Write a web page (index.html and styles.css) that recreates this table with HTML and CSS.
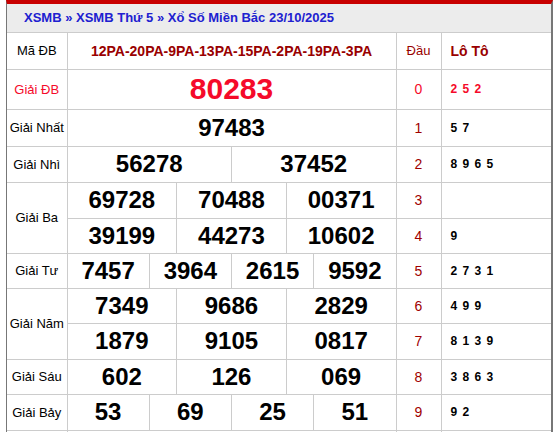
FILE: index.html
```html
<!DOCTYPE html>
<html lang="vi">
<head>
<meta charset="utf-8">
<title>XSMB 23/10/2025</title>
<link rel="stylesheet" href="styles.css">
</head>
<body>
<div class="wrap">
  <div class="crumb"><a href="#">XSMB</a> » <a href="#">XSMB Thứ 5</a> » <a href="#">Xổ Số Miền Bắc 23/10/2025</a></div>
  <table class="kq">
    <colgroup>
      <col class="c-label">
      <col class="c-m"><col class="c-m"><col class="c-m"><col class="c-m"><col class="c-m"><col class="c-m">
      <col class="c-m"><col class="c-m"><col class="c-m"><col class="c-m"><col class="c-m"><col class="c-m">
      <col class="c-dau">
      <col class="c-loto">
    </colgroup>
    <tr class="r-head">
      <td class="lbl">Mã ĐB</td>
      <td colspan="12" class="madb">12PA-20PA-9PA-13PA-15PA-2PA-19PA-3PA</td>
      <td class="dau dau-h">Đầu</td>
      <td class="loto loto-h">Lô Tô</td>
    </tr>
    <tr class="r-db">
      <td class="lbl red">Giải ĐB</td>
      <td colspan="12" class="num db">80283</td>
      <td class="dau red">0</td>
      <td class="loto red">2 5 2</td>
    </tr>
    <tr class="r-37">
      <td class="lbl">Giải Nhất</td>
      <td colspan="12" class="num">97483</td>
      <td class="dau">1</td>
      <td class="loto">5 7</td>
    </tr>
    <tr class="r-36">
      <td class="lbl">Giải Nhì</td>
      <td colspan="6" class="num">56278</td>
      <td colspan="6" class="num">37452</td>
      <td class="dau">2</td>
      <td class="loto">8 9 6 5</td>
    </tr>
    <tr class="r-36">
      <td class="lbl" rowspan="2">Giải Ba</td>
      <td colspan="4" class="num">69728</td>
      <td colspan="4" class="num">70488</td>
      <td colspan="4" class="num">00371</td>
      <td class="dau">3</td>
      <td class="loto"></td>
    </tr>
    <tr class="r-35">
      <td colspan="4" class="num">39199</td>
      <td colspan="4" class="num">44273</td>
      <td colspan="4" class="num">10602</td>
      <td class="dau">4</td>
      <td class="loto">9</td>
    </tr>
    <tr class="r-35">
      <td class="lbl">Giải Tư</td>
      <td colspan="3" class="num">7457</td>
      <td colspan="3" class="num">3964</td>
      <td colspan="3" class="num">2615</td>
      <td colspan="3" class="num">9592</td>
      <td class="dau">5</td>
      <td class="loto">2 7 3 1</td>
    </tr>
    <tr class="r-35">
      <td class="lbl" rowspan="2">Giải Năm</td>
      <td colspan="4" class="num">7349</td>
      <td colspan="4" class="num">9686</td>
      <td colspan="4" class="num">2829</td>
      <td class="dau">6</td>
      <td class="loto">4 9 9</td>
    </tr>
    <tr class="r-36">
      <td colspan="4" class="num">1879</td>
      <td colspan="4" class="num">9105</td>
      <td colspan="4" class="num">0817</td>
      <td class="dau">7</td>
      <td class="loto">8 1 3 9</td>
    </tr>
    <tr class="r-35">
      <td class="lbl">Giải Sáu</td>
      <td colspan="4" class="num">602</td>
      <td colspan="4" class="num">126</td>
      <td colspan="4" class="num">069</td>
      <td class="dau">8</td>
      <td class="loto">3 8 6 3</td>
    </tr>
    <tr class="r-36">
      <td class="lbl">Giải Bảy</td>
      <td colspan="3" class="num">53</td>
      <td colspan="3" class="num">69</td>
      <td colspan="3" class="num">25</td>
      <td colspan="3" class="num">51</td>
      <td class="dau">9</td>
      <td class="loto">9 2</td>
    </tr>
    <tr class="r-36">
      <td class="lbl"></td>
      <td colspan="12"></td>
      <td class="dau"></td>
      <td class="loto"></td>
    </tr>
  </table>
</div>
</body>
</html>
```
FILE: styles.css
```css
html, body {
  margin: 0;
  padding: 0;
  background: #fff;
}
body {
  font-family: "Liberation Sans", Arial, sans-serif;
  color: #000;
}
.wrap {
  margin-left: 6px;
  width: 544px;
  border-left: 1px solid #777;
  border-right: 2px solid #777;
  border-top: 4px solid #c80000;
}
.crumb {
  height: 28px;
  line-height: 28px;
  background: #ececec;
  border-bottom: 1px solid #ccc;
  padding-left: 17px;
  font-size: 13px;
  font-weight: bold;
  color: #2020d0;
  white-space: nowrap;
}
.crumb a {
  color: #2020d0;
  text-decoration: none;
}
.kq {
  width: 544px;
  border-collapse: collapse;
  table-layout: fixed;
}
.c-label { width: 60px; }
.c-m { width: 27.4167px; }
.c-dau { width: 45px; }
.c-loto { width: 110px; }
.kq td {
  border: 1px solid #ccc;
  padding: 0;
  text-align: center;
  vertical-align: middle;
  white-space: nowrap;
}
.kq tr:first-child td { border-top: none; }
.kq td.lbl { border-left: none; }
.kq td.loto { border-right: none; }
.r-head { height: 36px; }
.r-db { height: 40px; }
.r-37 { height: 37px; }
.r-36 { height: 36px; }
.r-35 { height: 35px; }
.lbl {
  font-size: 13px;
}
.madb {
  font-size: 14px;
  font-weight: bold;
  color: #990000;
}
.num {
  font-size: 24px;
  font-weight: bold;
}
.num.db {
  font-size: 30px;
  color: #f50a2a;
}
.dau {
  font-size: 14px;
  color: #a00000;
}
.kq td.dau-h {
  font-size: 13px;
  color: #990000;
}
.kq td.loto {
  text-align: left;
  padding-left: 9px;
  font-size: 12px;
  font-weight: bold;
  letter-spacing: 1px;
}
.kq td.loto-h {
  font-size: 14px;
  letter-spacing: 0;
  color: #990000;
}
.red, .kq td.red {
  color: #f50a2a;
}
```
